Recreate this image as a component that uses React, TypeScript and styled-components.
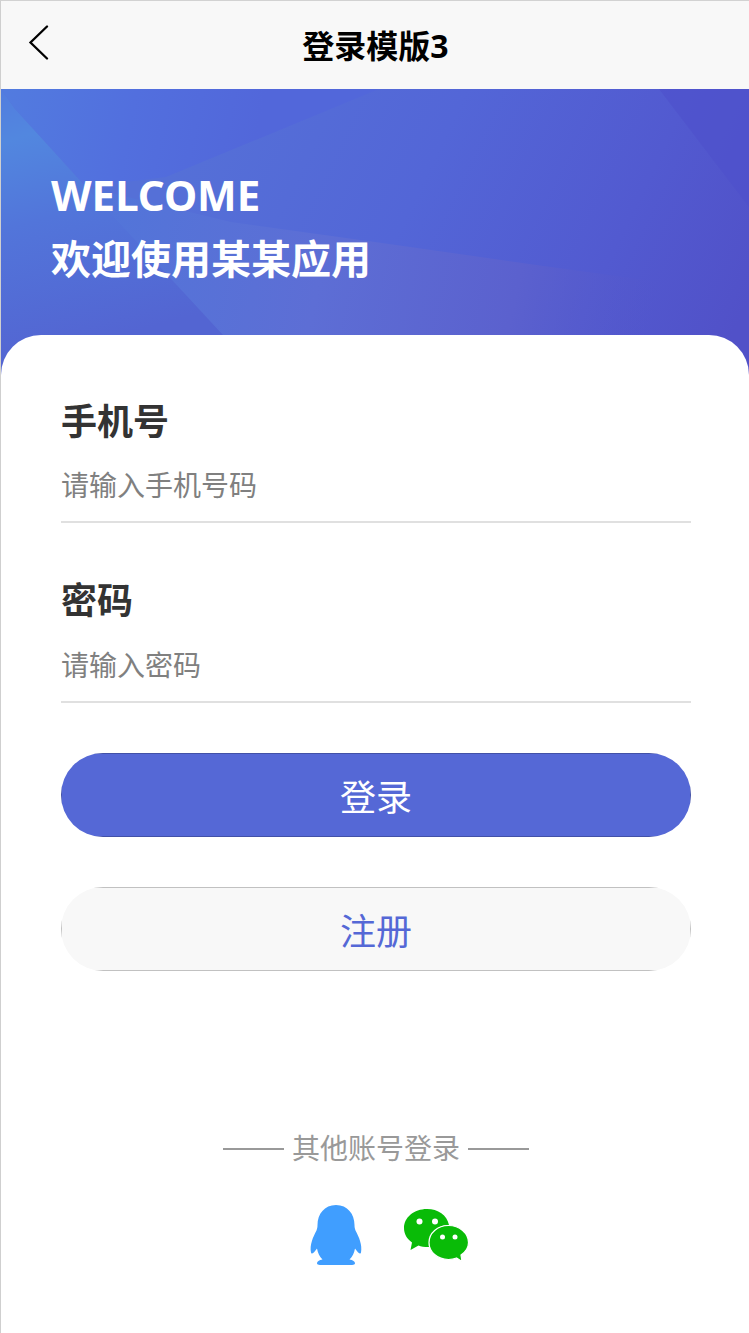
import React from "react";
import styled, { createGlobalStyle } from "styled-components";

const Global = createGlobalStyle`
  * { box-sizing: border-box; }
  body {
    margin: 0;
    background: #fff;
    font-family: "Noto Sans", "Noto Sans CJK SC", sans-serif;
  }
`;

const Page = styled.div`
  width: 749px;
  height: 1333px;
  overflow: hidden;
  border-top: 1px solid #d2d2d2;
  border-left: 1px solid #cfcfcf;
  background: #fff;
`;

const NavBar = styled.header`
  height: 88px;
  display: grid;
  grid-template-columns: 88px 1fr 88px;
  align-items: center;
  background: #f8f8f8;
`;

const BackButton = styled.button`
  display: flex;
  border: 0;
  padding: 0 0 6px 24px;
  background: none;
`;

const NavTitle = styled.h1`
  margin: 0;
  padding: 2px 0 0 1px;
  text-align: center;
  font-size: 32px;
  line-height: 44px;
  font-weight: 700;
  color: #000;
`;

const Hero = styled.section`
  position: relative;
  height: 286px;
  padding: 74px 50px 0;
  color: #fff;
`;

const HeroArt = styled.svg`
  position: absolute;
  inset: 0;
  width: 100%;
  height: 100%;
`;

const HeroLine = styled.p<{ $size: number }>`
  position: relative;
  margin: 0;
  font-size: ${(p) => p.$size}px;
  line-height: 64px;
  font-weight: 700;
`;

const Card = styled.main`
  position: relative;
  margin-top: -40px;
  padding: 56px 58px 0 60px;
  border-radius: 40px 40px 0 0;
  background: #fff;
`;

const Field = styled.label`
  display: flex;
  flex-direction: column;
  justify-content: space-between;
  height: 132px;
  & + & {
    height: 133px;
    margin-top: 47px;
  }
  border-bottom: 2px solid #e0e0e0;
`;

const FieldLabel = styled.span`
  font-size: 36px;
  line-height: 61px;
  font-weight: 700;
  color: #333;
`;

const FieldInput = styled.input`
  width: 100%;
  height: 69px;
  padding: 0 0 4px;
  border: 0;
  outline: 0;
  background: none;
  font: 400 28px "Noto Sans", "Noto Sans CJK SC", sans-serif;
  &::placeholder { color: #808080; opacity: 1; }
`;

const Actions = styled.div`
  display: flex;
  flex-direction: column;
  gap: 50px;
  margin-top: 50px;
`;

const PillButton = styled.button<{ $primary?: boolean }>`
  position: relative;
  width: 630px;
  height: 84px;
  padding: 1px 0 0;
  border: 0;
  border-radius: 42px;
  overflow: hidden;
  font: 400 36px "Noto Sans", "Noto Sans CJK SC", sans-serif;
  color: ${(p) => (p.$primary ? "#fff" : "#5568d6")};
  background: ${(p) => (p.$primary ? "#5568d6" : "#f8f8f8")};
  &::after {
    content: "";
    position: absolute;
    inset: 0;
    border: 1px solid rgba(0, 0, 0, 0.22);
  }
`;

const Divider = styled.div`
  display: flex;
  align-items: center;
  justify-content: center;
  gap: 8px;
  margin-top: 157px;
  font-size: 28px;
  line-height: 40px;
  color: #999;
  &::before, &::after {
    content: "";
    width: 61px;
    height: 2px;
    margin-top: 1px;
    background: #999;
  }
`;

const Socials = styled.div`
  display: flex;
  justify-content: center;
  gap: 38px;
  margin-top: 35px;
  padding-left: 26px;
`;

export default function App() {
  return (
    <Page>
      <Global />
      <NavBar>
        <BackButton aria-label="返回">
          <svg width="26" height="36" viewBox="0 0 26 36" fill="none" stroke="#000" strokeWidth="2.3" strokeLinecap="round">
            <path d="M22 2.500 5.500 18.500 22 34.500" />
          </svg>
        </BackButton>
        <NavTitle>登录模版3</NavTitle>
      </NavBar>
      <Hero>
        <HeroArt viewBox="0 0 748 286" preserveAspectRatio="none" aria-hidden="true">
          <defs>
            <linearGradient id="base" gradientUnits="userSpaceOnUse" x1="200" y1="20" x2="720" y2="270">
              <stop offset="0" stopColor="#5570d7" />
              <stop offset="0.4" stopColor="#5366d7" />
              <stop offset="0.75" stopColor="#525ad0" />
              <stop offset="1" stopColor="#5151c8" />
            </linearGradient>
            <linearGradient id="cyan" gradientUnits="userSpaceOnUse" x1="0" y1="4" x2="70" y2="260">
              <stop offset="0" stopColor="#527ddf" />
              <stop offset="0.18" stopColor="#5287df" />
              <stop offset="0.5" stopColor="#5275da" />
              <stop offset="1" stopColor="#5365d2" />
            </linearGradient>
            <linearGradient id="blue" gradientUnits="userSpaceOnUse" x1="0" y1="30" x2="250" y2="80">
              <stop offset="0" stopColor="#527bdf" />
              <stop offset="0.5" stopColor="#526fde" />
              <stop offset="1" stopColor="#5267da" />
            </linearGradient>
            <linearGradient id="lower" gradientUnits="userSpaceOnUse" x1="105" y1="120" x2="650" y2="240">
              <stop offset="0" stopColor="#5275d9" />
              <stop offset="0.4" stopColor="#5d6ed5" />
              <stop offset="0.75" stopColor="#5b61ce" />
              <stop offset="1" stopColor="#5557c9" stopOpacity="0" />
            </linearGradient>
          </defs>
          <rect width="748" height="286" fill="url(#base)" />
          <path d="M0 0H378L165 88 85 98 14 20Z" fill="url(#blue)" />
          <path d="M85 98 230 133 374 153 550 178 748 205V286H250Z" fill="url(#lower)" />
          <path d="M0 0 14 20 85 98 222 246 250 286H0Z" fill="url(#cyan)" />
          <path d="M658 0H748V118Z" fill="#4e50cb" opacity="0.6" />
        </HeroArt>
        <HeroLine $size={42}>WELCOME</HeroLine>
        <HeroLine $size={40}>欢迎使用某某应用</HeroLine>
      </Hero>
      <Card>
        <Field>
          <FieldLabel>手机号</FieldLabel>
          <FieldInput placeholder="请输入手机号码" />
        </Field>
        <Field>
          <FieldLabel>密码</FieldLabel>
          <FieldInput type="password" placeholder="请输入密码" />
        </Field>
        <Actions>
          <PillButton $primary>登录</PillButton>
          <PillButton>注册</PillButton>
        </Actions>
        <Divider>其他账号登录</Divider>
        <Socials>
          <svg width="56" height="64" viewBox="0 0 56 64" fill="#409eff">
            <path d="M28 2C16.500 2 9.500 11 9.500 22c0 2-.3 3.500-1 5.500C5 34 1.500 42 3 49.500c.3 2.400 3 .5 6-4 1 5 2.500 8 5.500 11C11 57 9 58.500 9 60.200 9 62.500 13 62 28 62s19 .5 19-1.800c0-1.700-2-3.200-5.500-3.700 3-3 4.500-6 5.500-11 3 4.500 5.700 6.400 6 4C54.500 42 51 34 47.500 27.500c-.7-2-1-3.500-1-5.500C46.500 11 39.500 2 28 2Z" />
          </svg>
          <svg width="68" height="64" viewBox="0 0 68 64" fill="#09bb07">
            <path d="M25 6C12 6 2 14.500 2 25c0 6 3 11 8 14.500L8.500 47l8-4.500C19 43.500 22 44 27 44 26 30 36 22 47 22 45 12 36 6 25 6Z" />
            <path d="M46.500 22.500C35.500 22.500 27 30 27 39.500S35.500 56.500 46.500 56.500c3 0 5.500-.5 8-1.500l5.500 3.500-1-6.500c4.500-3 7.500-7.500 7.500-12.500C66.500 30 57.500 22.500 46.500 22.500Z" stroke="#fff" strokeWidth="1.200" />
            <g fill="#fff">
              <circle cx="17.500" cy="18.500" r="3" />
              <circle cx="33" cy="18.500" r="3" />
              <circle cx="40.500" cy="34" r="2.500" />
              <circle cx="53" cy="34" r="2.500" />
            </g>
          </svg>
        </Socials>
      </Card>
    </Page>
  );
}
